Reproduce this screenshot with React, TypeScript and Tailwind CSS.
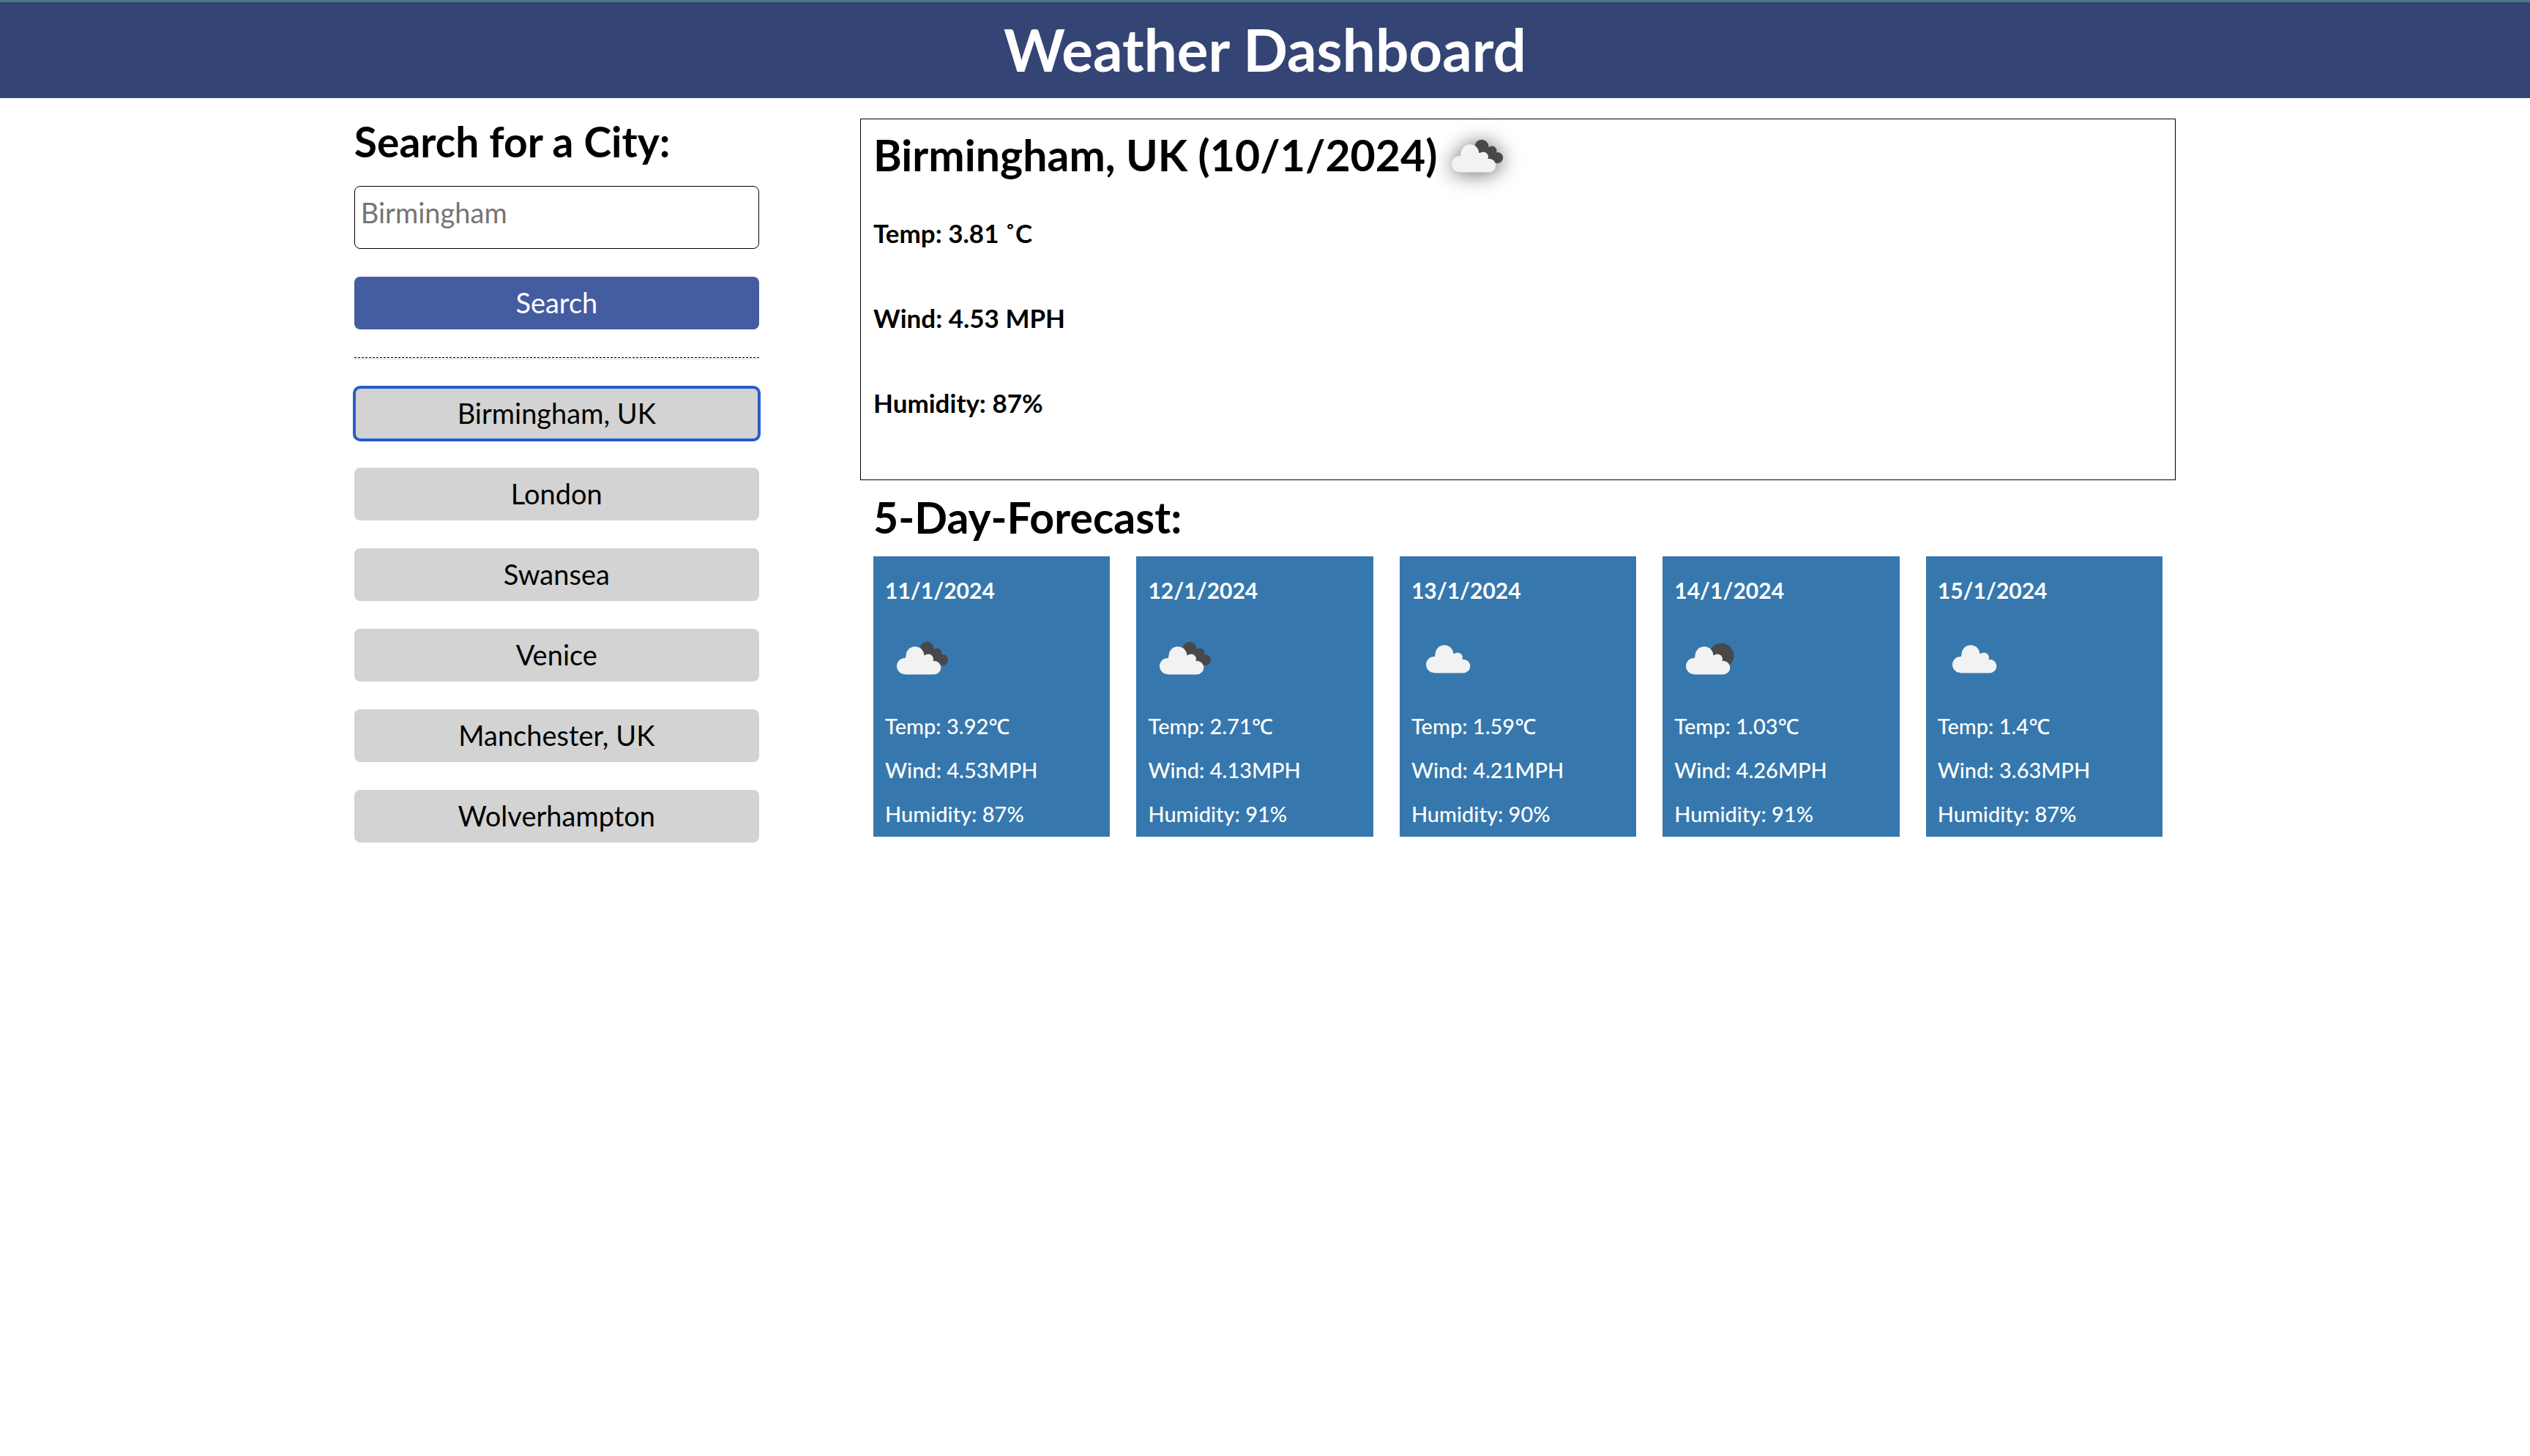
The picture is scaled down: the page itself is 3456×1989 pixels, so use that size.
type IconKind = "cloud" | "broken" | "partial";

interface Day {
  date: string;
  icon: IconKind;
  temp: string;
  wind: string;
  humidity: string;
}

const cities = ["Birmingham, UK", "London", "Swansea", "Venice", "Manchester, UK", "Wolverhampton"];

const days: Day[] = [
  { date: "11/1/2024", icon: "broken", temp: "3.92", wind: "4.53", humidity: "87" },
  { date: "12/1/2024", icon: "broken", temp: "2.71", wind: "4.13", humidity: "91" },
  { date: "13/1/2024", icon: "cloud", temp: "1.59", wind: "4.21", humidity: "90" },
  { date: "14/1/2024", icon: "partial", temp: "1.03", wind: "4.26", humidity: "91" },
  { date: "15/1/2024", icon: "cloud", temp: "1.4", wind: "3.63", humidity: "87" },
];

function CloudShape() {
  return (
    <g>
      <circle cx="31" cy="58" r="11" />
      <circle cx="45" cy="43.5" r="12.3" />
      <circle cx="63" cy="48.5" r="7" />
      <circle cx="71" cy="60" r="9.3" />
      <path d="M31 69.3V50L33 42H56L62 45L69 51V69.3Z" />
      <path d="M31 60H71V69.3H31Z" />
    </g>
  );
}

function WeatherIcon({ kind, className = "" }: { kind: IconKind; className?: string }) {
  return (
    <svg viewBox="0 0 100 100" className={`size-[100px] shrink-0 ${className}`} role="img" aria-label="Cloudy">
      {kind === "broken" && (
        <g fill="#48484a">
          <circle cx="57" cy="36.2" r="9.4" />
          <circle cx="71" cy="42" r="6.5" />
          <circle cx="78.6" cy="51.5" r="7.6" />
          <path d="M57 36L65 36.5L71 38L77 44L77 59L60 52L48 38Z" />
        </g>
      )}
      {kind === "partial" && <circle cx="64.5" cy="45.8" r="17" fill="#48484a" />}
      {kind === "cloud" ? (
        <g fill="#f2f2f2">
          <CloudShape />
        </g>
      ) : (
        <g fill="#f2f2f2" transform="translate(-4 2)">
          <CloudShape />
        </g>
      )}
    </svg>
  );
}

export default function App() {
  return (
    <div className="min-h-screen bg-white font-['Lato','Noto_Sans',sans-serif] text-black">
      <header className="border-t-3 border-[#4b7b80] bg-[#344475] pt-4 pb-[19px] text-center">
        <h1 className="text-[80px] leading-24 font-bold text-white">Weather Dashboard</h1>
      </header>

      <main className="flex items-start px-[14%]">
        <aside className="w-2/9 pt-[25px]">
          <form onSubmit={(e) => e.preventDefault()}>
            <h2 className="mb-[27px] text-[57px] leading-[68px] font-bold">
              <label htmlFor="city">Search for a City:</label>
            </h2>
            <input
              id="city"
              type="text"
              placeholder="Birmingham"
              className="block h-[86px] w-full rounded-lg border border-black px-2 pb-3.5 text-[38px] leading-[46px] placeholder:text-[#757575]"
            />
            <button
              type="submit"
              className="mt-[38px] block h-[72px] w-full rounded-lg bg-[#445ca0] pb-0.5 text-[38px] leading-[46px] text-white"
            >
              Search
            </button>
          </form>
          <hr className="mt-[38px] mb-[37px] h-1 border-t border-dashed border-black bg-[#f0f0f0] bg-clip-padding" />
          <div className="flex flex-col gap-[38px]">
            {cities.map((city, i) => (
              <button
                key={city}
                type="button"
                className={
                  i === 0
                    ? "h-[72px] rounded-lg bg-[#d3d3d3] pb-0.5 text-[38px] leading-[46px] outline-4 -outline-offset-2 outline-[#265ecb]"
                    : "h-[72px] rounded-lg bg-[#d3d3d3] pb-0.5 text-[38px] leading-[46px]"
                }
              >
                {city}
              </button>
            ))}
          </div>
        </aside>

        <div className="ml-auto w-13/18 pt-7">
          <section className="border border-black px-[17px] pb-[85px] font-bold">
            <div className="flex items-center gap-1 pt-px">
              <h2 className="pb-1 text-[59px] leading-[70px]">Birmingham, UK (10/1/2024)</h2>
              <WeatherIcon kind="broken" className="drop-shadow-[0_2px_14px_#666666]" />
            </div>
            <div className="mt-[34px] flex flex-col gap-[76px] text-[35px] leading-10">
              <p>Temp: 3.81 ˚C</p>
              <p>Wind: 4.53 MPH</p>
              <p>Humidity: 87%</p>
            </div>
          </section>

          <section className="px-[18px] pt-4">
            <h2 className="mb-[18px] text-[59px] leading-[70px] font-bold">5-Day-Forecast:</h2>
            <div className="grid grid-cols-5 gap-9">
              {days.map((d) => (
                <article key={d.date} className="bg-[#3678ad] px-4 pt-7 pb-3.5 text-white">
                  <h3 className="text-[30px] leading-9 font-bold">{d.date}</h3>
                  <WeatherIcon kind={d.icon} className="mt-[26px] mb-6" />
                  <div className="flex flex-col gap-[25px] text-[29px] leading-[35px] font-medium">
                    <p>Temp: {d.temp}℃</p>
                    <p>Wind: {d.wind}MPH</p>
                    <p>Humidity: {d.humidity}%</p>
                  </div>
                </article>
              ))}
            </div>
          </section>
        </div>
      </main>
    </div>
  );
}
